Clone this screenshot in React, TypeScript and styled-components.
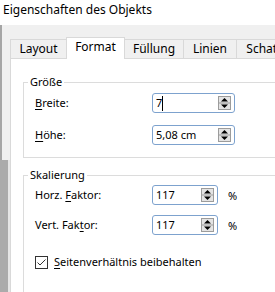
import React from "react";
import styled, { createGlobalStyle } from "styled-components";

const GlobalStyle = createGlobalStyle`
  html, body {
    margin: 0;
    padding: 0;
    background: #f0f0f0;
  }
  body {
    font-family: "Noto Sans", "Segoe UI", sans-serif;
    font-size: 12px;
    color: #000;
  }
`;

const Window = styled.div`
  width: 275px;
  height: 292px;
  overflow: hidden;
  background: #f0f0f0;
  display: flex;
  flex-direction: column;
`;

const TitleBar = styled.div`
  flex: none;
  height: 25px;
  box-sizing: border-box;
  padding: 2px 0 0 3px;
  line-height: 16px;
  background: #fff;
  white-space: nowrap;
`;

const Body = styled.div`
  flex: 1;
  display: flex;
  min-height: 0;
`;

const LeftRail = styled.div`
  flex: none;
  width: 10px;
  display: flex;
  flex-direction: column;
`;

const RailTop = styled.div`
  height: 135px;
  border-left: 2px solid #a6a6a6;
  background: #f0f0f0;
`;

const RailBottom = styled.div`
  flex: 1;
  background: linear-gradient(to right, #ababab 0 8px, #e6e6e6 8px);
`;

const Dialog = styled.div`
  flex: none;
  width: 300px;
  display: flex;
  flex-direction: column;
`;

const TabStrip = styled.div`
  flex: none;
  height: 33px;
  display: flex;
  align-items: flex-end;
`;

const Tab = styled.div<{ $w: number; $active?: boolean }>`
  position: relative;
  flex: none;
  box-sizing: border-box;
  width: ${(p) => p.$w}px;
  height: ${(p) => (p.$active ? 22 : 19)}px;
  margin-bottom: ${(p) => (p.$active ? -1 : 0)}px;
  margin-left: -1px;
  padding-top: 1px;
  border: 1px solid #d9d9d9;
  border-bottom: none;
  background: ${(p) => (p.$active ? "#fff" : "#f0f0f0")};
  z-index: ${(p) => (p.$active ? 1 : 0)};
  line-height: 16px;
  text-align: center;
  white-space: nowrap;
  overflow: hidden;
  &:first-child {
    margin-left: 0;
  }
`;

const Panel = styled.div`
  flex: 1;
  background: #fff;
  border: 1px solid #d9d9d9;
  padding: 15px 0 0 12px;
  font-size: 11px;
`;

const Group = styled.fieldset<{ $mb?: number }>`
  margin: 0 0 ${(p) => p.$mb ?? 0}px 0;
  padding: 0;
  min-width: 0;
  border: 1px solid #dcdcdc;
  border-right: none;
`;

const Legend = styled.legend`
  margin-left: 4px;
  padding: 0 2px;
  line-height: 16px;
`;

const Rows = styled.div<{ $gap: number; $pt: number; $pb: number }>`
  display: flex;
  flex-direction: column;
  gap: ${(p) => p.$gap}px;
  padding: ${(p) => p.$pt}px 0 ${(p) => p.$pb}px 11px;
`;

const Row = styled.div`
  display: flex;
  align-items: center;
`;

const Label = styled.div`
  flex: none;
  width: 117px;
  line-height: 16px;
  white-space: nowrap;
`;

const Key = styled.span`
  text-decoration: underline;
  text-underline-offset: 2px;
`;

const SpinBox = styled.div<{ $w: number }>`
  flex: none;
  box-sizing: border-box;
  width: ${(p) => p.$w}px;
  height: 20px;
  display: flex;
  align-items: center;
  padding: 0 3px 0 3px;
  border: 1px solid #7da2ce;
  border-radius: 3px;
  background: #fff;
`;

const Value = styled.span`
  flex: 1;
  line-height: 16px;
  white-space: nowrap;
  display: flex;
  align-items: center;
`;

const Caret = styled.span`
  display: inline-block;
  width: 1px;
  height: 15px;
  background: #000;
`;

const Unit = styled.span`
  margin-left: 10px;
`;

const CheckRow = styled.label`
  display: flex;
  align-items: center;
  gap: 6px;
  margin-top: 9px;
  line-height: 16px;
  white-space: nowrap;
`;

const Spinner = () => (
  <svg width="13" height="14" viewBox="0 0 13 14">
    <rect x="0.5" y="0.5" width="12" height="13" fill="#e4e4e4" stroke="#9c9c9c" />
    <line x1="0" y1="7" x2="13" y2="7" stroke="#9c9c9c" />
    <path d="M3 5.5 L6.5 2 L10 5.5Z" fill="#000" />
    <path d="M3 8.5 L6.5 12 L10 8.5Z" fill="#000" />
  </svg>
);

const CheckBox = () => (
  <svg width="13" height="13" viewBox="0 0 13 13">
    <rect x="0.5" y="0.5" width="12" height="12" fill="#fff" stroke="#333" />
    <path d="M2.5 6.5 L5 9 L10.5 3.5" fill="none" stroke="#333" strokeWidth="1" />
  </svg>
);

const tabs = [
  { label: "Layout", w: 57 },
  { label: "Format", w: 59, active: true },
  { label: "Füllung", w: 60 },
  { label: "Linien", w: 54 },
  { label: "Schatten", w: 70 },
];

export default function App() {
  return (
    <>
      <GlobalStyle />
      <Window>
        <TitleBar>Eigenschaften des Objekts</TitleBar>
        <Body>
          <LeftRail>
            <RailTop />
            <RailBottom />
          </LeftRail>
          <Dialog>
            <TabStrip>
              {tabs.map((t) => (
                <Tab key={t.label} $w={t.w} $active={t.active}>
                  {t.label}
                </Tab>
              ))}
            </TabStrip>
            <Panel>
              <Group $mb={9}>
                <Legend>Größe</Legend>
                <Rows $gap={12} $pt={3} $pb={12}>
                  <Row>
                    <Label>
                      <Key>B</Key>reite:
                    </Label>
                    <SpinBox $w={83}>
                      <Value>
                        7<Caret />
                      </Value>
                      <Spinner />
                    </SpinBox>
                  </Row>
                  <Row>
                    <Label>
                      <Key>H</Key>öhe:
                    </Label>
                    <SpinBox $w={83}>
                      <Value>5,08 cm</Value>
                      <Spinner />
                    </SpinBox>
                  </Row>
                </Rows>
              </Group>
              <Group>
                <Legend>Skalierung</Legend>
                <Rows $gap={10} $pt={2} $pb={40}>
                  <Row>
                    <Label>
                      Horz. <Key>F</Key>aktor:
                    </Label>
                    <SpinBox $w={66}>
                      <Value>117</Value>
                      <Spinner />
                    </SpinBox>
                    <Unit>%</Unit>
                  </Row>
                  <Row>
                    <Label>
                      Vert. Fak<Key>t</Key>or:
                    </Label>
                    <SpinBox $w={66}>
                      <Value>117</Value>
                      <Spinner />
                    </SpinBox>
                    <Unit>%</Unit>
                  </Row>
                  <CheckRow>
                    <CheckBox />
                    <span>
                      <Key>S</Key>eitenverhältnis beibehalten
                    </span>
                  </CheckRow>
                </Rows>
              </Group>
            </Panel>
          </Dialog>
        </Body>
      </Window>
    </>
  );
}
